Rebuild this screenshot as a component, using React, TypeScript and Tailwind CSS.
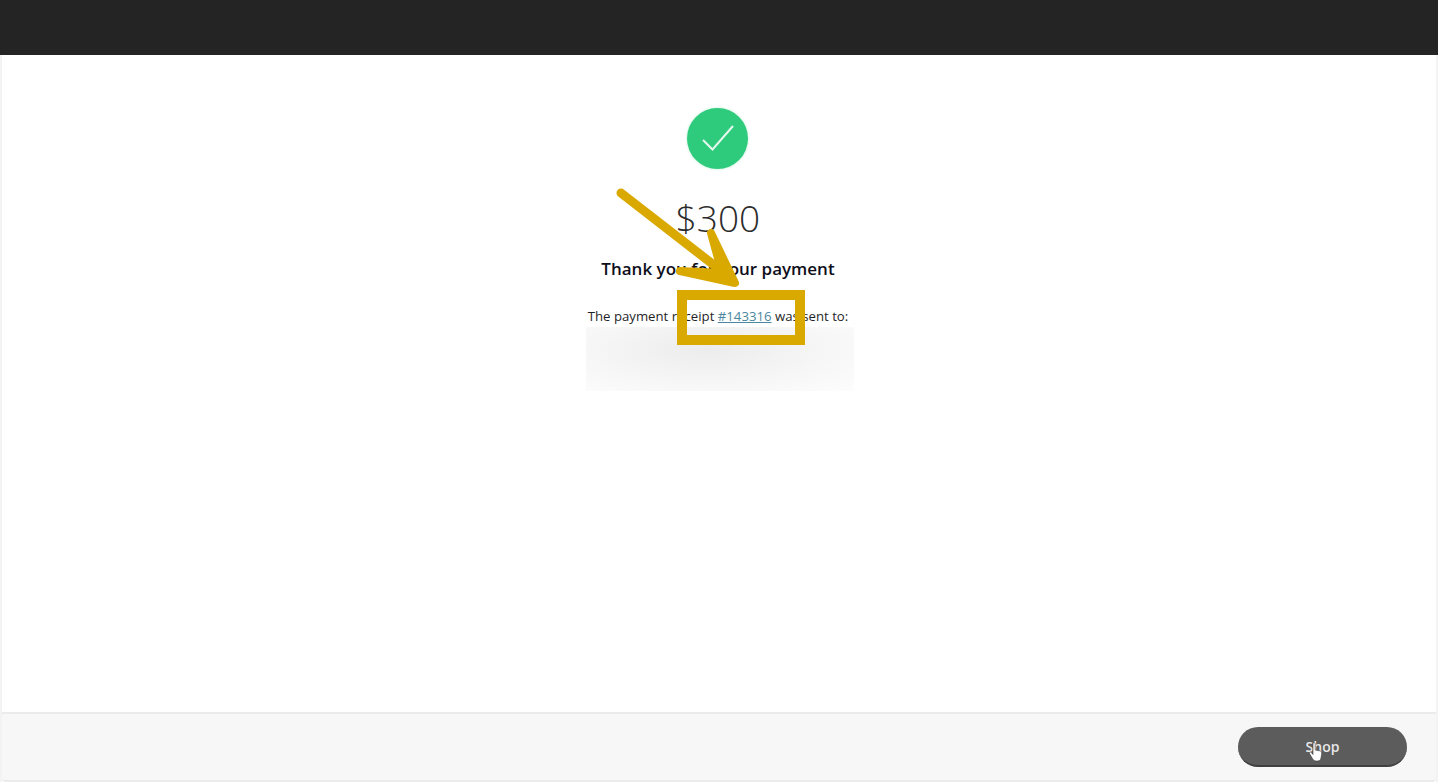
import React from "react";

export default function App() {
  return (
    <div className="relative flex h-[784px] w-[1438px] flex-col overflow-hidden bg-white font-['Open_Sans',sans-serif]">
      <header className="h-[55px] shrink-0 bg-[#242424]" />
      <main className="flex min-h-0 flex-1 flex-col border-l-2 border-r-2 border-[#f3f3f3] bg-white">
        <section className="flex flex-1 flex-col items-center pt-[53px] pr-[2px]">
          <div className="ml-[-1px] flex h-[61px] w-[61px] items-center justify-center rounded-full bg-[#2ecb7d] shadow-[0_0_3px_#bfeed6]">
            <svg width="36" height="30" viewBox="0 0 36 30" fill="none" className="mt-[1px]">
              <path d="M3 16 L12.5 25.5 L33 2" stroke="#e6f8ee" strokeWidth="2" />
            </svg>
          </div>
          <div className="mt-[24px] h-[50px] text-[37px] leading-[50px] font-light text-[#2c2c2c]">$300</div>
          <h1 className="mt-[14px] text-[17px] leading-[24px] font-semibold text-[#0e0e1a]">Thank you for your payment</h1>
          <p className="mt-[25px] text-[13.2px] leading-[20px] text-[#1f1f28]">
            The payment receipt{" "}
            <a className="text-[#4a87a0] underline" href="#">#143316</a>{" "}
            was sent to:
          </p>
          <div className="ml-[4px] mt-[1px] h-[64px] w-[268px] bg-[radial-gradient(ellipse_at_45%_35%,#ececec_0%,#f6f6f6_55%,#fdfdfd_100%)]" />
        </section>
        <footer className="flex h-[70px] shrink-0 items-start justify-end rounded-b-[4px] border-t-2 border-b-2 border-[#ebebeb] bg-[#f7f7f7] pt-[13px] pr-[29px]">
          <button className="relative h-[40px] w-[169px] rounded-full border-b-2 border-[#3f3f3f] bg-[#5c5c5c] text-[14px] font-semibold text-[#e8e8e8]">
            Shop
            <svg width="16" height="20" viewBox="0 0 16 20" className="absolute left-[70px] top-[15px]">
              <path d="M5 1.5 C5 .5 7.2 .5 7.2 1.5 V8 L11.5 8.8 C13.5 9.3 14 10.5 13.7 12 L13 16 C12.7 18 11.5 19 9.5 19 H8 C6.5 19 5.5 18.3 4.7 17 L1.5 11.5 C1 10.3 2.6 9.6 3.4 10.6 L5 12.5 Z" fill="#ffffff" stroke="#3a3a3a" strokeWidth="0.6" />
            </svg>
          </button>
        </footer>
      </main>
      <div className="h-[2px] shrink-0 bg-white" />
      <div className="absolute left-[677px] top-[290px] h-[55px] w-[128px] border-[10px] border-[#d9a900]" />
      <svg className="absolute left-0 top-0 pointer-events-none" width="1438" height="784" fill="none">
        <path d="M621 193 L728 276" stroke="#d9a900" strokeWidth="9" strokeLinecap="round" />
        <path d="M711 233 L735 283 L680 271 L722 273 Z" fill="#d9a900" stroke="#d9a900" strokeWidth="8" strokeLinejoin="round" />
      </svg>
    </div>
  );
}
